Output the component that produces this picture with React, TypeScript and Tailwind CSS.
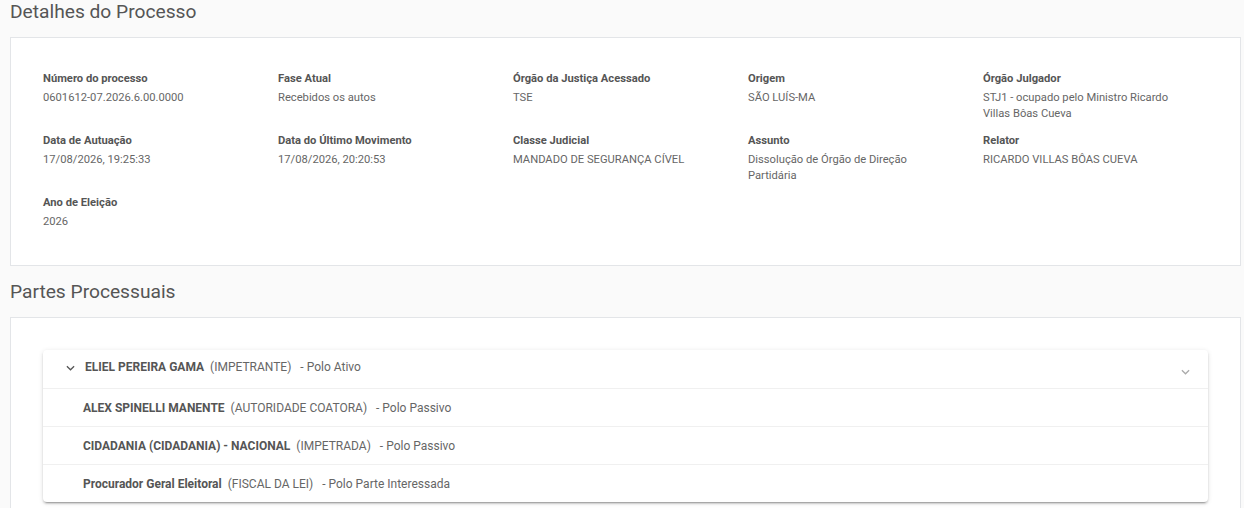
import React from "react";

interface Campo {
  label: string;
  value: string;
}

interface Parte {
  nome: string;
  tipo: string;
  polo: string;
}

const campos: Campo[] = [
  { label: "Número do processo", value: "0601612-07.2026.6.00.0000" },
  { label: "Fase Atual", value: "Recebidos os autos" },
  { label: "Órgão da Justiça Acessado", value: "TSE" },
  { label: "Origem", value: "SÃO LUÍS-MA" },
  { label: "Órgão Julgador", value: "STJ1 - ocupado pelo Ministro Ricardo Villas Bôas Cueva" },
  { label: "Data de Autuação", value: "17/08/2026, 19:25:33" },
  { label: "Data do Último Movimento", value: "17/08/2026, 20:20:53" },
  { label: "Classe Judicial", value: "MANDADO DE SEGURANÇA CÍVEL" },
  { label: "Assunto", value: "Dissolução de Órgão de Direção Partidária" },
  { label: "Relator", value: "RICARDO VILLAS BÔAS CUEVA" },
  { label: "Ano de Eleição", value: "2026" },
];

const partes: Parte[] = [
  { nome: "ALEX SPINELLI MANENTE", tipo: "(AUTORIDADE COATORA)", polo: "- Polo Passivo" },
  { nome: "CIDADANIA (CIDADANIA) - NACIONAL", tipo: "(IMPETRADA)", polo: "- Polo Passivo" },
  { nome: "Procurador Geral Eleitoral", tipo: "(FISCAL DA LEI)", polo: "- Polo Parte Interessada" },
];

const Chevron: React.FC<{ className?: string }> = ({ className }) => (
  <svg viewBox="0 0 10 6" className={className} fill="none" stroke="currentColor" strokeWidth="1.4">
    <path d="M1 1l4 4 4-4" />
  </svg>
);

const ParteLinha: React.FC<{ parte: Parte }> = ({ parte }) => (
  <div className="flex items-center h-[37px] pl-[40px] text-[12px]">
    <span className="font-bold text-[#555]">{parte.nome}</span>
    <span className="ml-[6px] text-[#666]">{parte.tipo}</span>
    <span className="ml-[9px] text-[#666]">{parte.polo}</span>
  </div>
);

export default function App() {
  return (
    <div
      className="min-h-[508px] bg-[#fafafa] pl-[10px] pr-[3px]"
      style={{ fontFamily: "Roboto, 'Liberation Sans', sans-serif" }}
    >
      <h2 className="text-[19.2px] leading-[24px] text-[#555] font-normal">Detalhes do Processo</h2>
      <div className="mt-[13px] bg-white border border-[#e3e5e8] pt-[33px] pb-[35px] pl-[32px]">
        <div className="grid grid-cols-[235px_235px_235px_235px_235px] gap-y-[11px]">
          {campos.map((c) => (
            <div key={c.label} className="pr-[40px]">
              <div className="text-[11.2px] leading-[16px] font-bold text-[#555]">{c.label}</div>
              <div className="mt-[3px] text-[11.2px] leading-[16px] text-[#666]">{c.value}</div>
            </div>
          ))}
        </div>
      </div>

      <h2 className="mt-[14px] text-[19.2px] leading-[24px] text-[#555] font-normal">Partes Processuais</h2>
      <div className="mt-[13px] bg-white border border-[#e3e5e8] pt-[32px] pb-[32px] px-[32px]">
        <div className="rounded-[4px] bg-white shadow-[0_3px_1px_-2px_rgba(0,0,0,0.2),0_2px_2px_0_rgba(0,0,0,0.14),0_1px_5px_0_rgba(0,0,0,0.12)]">
          <div className="flex items-center h-[39px] pb-[4px] pl-[23px] pr-[18px] text-[12px] border-b border-[#f0f0f0]">
            <Chevron className="w-[9px] h-[6px] text-[#555] mt-[2px]" />
            <span className="ml-[10px] font-bold text-[#555]">ELIEL PEREIRA GAMA</span>
            <span className="ml-[6px] text-[#666]">(IMPETRANTE)</span>
            <span className="ml-[9px] text-[#666]">- Polo Ativo</span>
            <Chevron className="ml-auto w-[9px] h-[6px] text-[#aaa] mt-[10px]" />
          </div>
          {partes.map((p, i) => (
            <div key={p.nome} className={i < partes.length - 1 ? "border-b border-[#f0f0f0]" : ""}>
              <ParteLinha parte={p} />
            </div>
          ))}
        </div>
      </div>
    </div>
  );
}
